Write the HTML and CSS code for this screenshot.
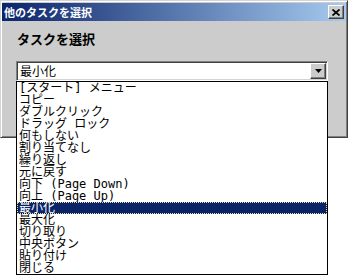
FILE: index.html
```html
<!DOCTYPE html>
<html lang="ja">
<head>
    <meta charset="UTF-8">
    <title>他のタスクを選択</title>
    <link rel="stylesheet" href="styles.css">
</head>
<body>
<div class="window">
    <div class="title-bar">
        <span class="title">他のタスクを選択</span>
        <button class="close" type="button">
            <svg width="8" height="7" viewBox="0 0 8 7">
                <path d="M0.5 0.5L7.5 6.5M7.5 0.5L0.5 6.5" stroke="#000" stroke-width="1.7" fill="none"/>
            </svg>
        </button>
    </div>
    <div class="content">
        <div class="label">タスクを選択</div>
        <div class="combo">
            <span class="combo-value">最小化</span>
            <span class="combo-button">
                <svg width="7" height="4" viewBox="0 0 7 4"><path d="M0 0H7L3.5 4Z" fill="#000"/></svg>
            </span>
            <ul class="list">
                <li>[スタート] メニュー</li>
                <li>コピー</li>
                <li>ダブルクリック</li>
                <li>ドラッグ ロック</li>
                <li>何もしない</li>
                <li>割り当てなし</li>
                <li>繰り返し</li>
                <li>元に戻す</li>
                <li>向下 (Page Down)</li>
                <li>向上 (Page Up)</li>
                <li class="selected">最小化</li>
                <li>最大化</li>
                <li>切り取り</li>
                <li>中央ボタン</li>
                <li>貼り付け</li>
                <li>閉じる</li>
            </ul>
        </div>
    </div>
</div>
</body>
</html>
```
FILE: styles.css
```css
html,
body {
    height: 275px;
}

body {
    margin: 0;

    font-family: "Noto Sans CJK JP", "Liberation Sans", sans-serif;

    background-color: #fff;
}

.window {
    position: relative;

    box-sizing: border-box;
    width: 348px;
    height: 138px;
    padding: 2px 1px 0 1px;

    border: 1px solid;
    border-color: #d4d4d4 #404040 #404040 #d4d4d4;
    background-color: #cccccc;
    box-shadow: inset 1px 1px #fff, inset -1px -1px #808080;
}

.title-bar {
    display: flex;
    align-items: center;
    justify-content: space-between;

    height: 18px;
    padding: 0 2px 0 2px;

    background: linear-gradient(to right, #0a246a, #a6caf0);
}

.title {
    font-size: 11px;
    font-weight: bold;
    line-height: 18px;

    color: #fff;
}

.close {
    display: flex;
    align-items: center;
    justify-content: center;

    box-sizing: border-box;
    width: 16px;
    height: 14px;
    padding: 0;

    border: 1px solid;
    border-color: #fff #404040 #404040 #fff;
    background-color: #cccccc;
    box-shadow: inset -1px -1px #808080;
}

.content {
    padding: 10px 16px 0 14px;
}

.label {
    font-size: 13px;
    font-weight: bold;
    line-height: 16px;

    margin-bottom: 14px;
    padding-left: 1px;

    color: #000;
}

.combo {
    position: relative;
    z-index: 1;

    display: flex;
    align-items: center;
    justify-content: space-between;

    box-sizing: border-box;
    width: 312px;
    height: 20px;

    border: 1px solid;
    border-color: #808080 #fff #fff #808080;
    background-color: #fff;
    box-shadow: inset 1px 1px #404040, inset -1px -1px #d4d4d4;
}

.combo-value {
    font-size: 12px;
    line-height: 16px;

    padding-left: 3px;
}

.combo-button {
    display: flex;
    align-items: center;
    justify-content: center;

    box-sizing: border-box;
    width: 16px;
    height: 16px;
    margin-right: 1px;

    border: 1px solid;
    border-color: #fff #404040 #404040 #fff;
    background-color: #cccccc;
    box-shadow: inset -1px -1px #808080;
}

.list {
    position: absolute;
    top: 19px;
    left: -1px;

    box-sizing: border-box;
    width: 312px;
    margin: 0;
    padding: 0;

    list-style: none;

    border: 1px solid #000;
    background-color: #fff;
}

.list li {
    font-family: "DejaVu Sans Mono", "Noto Sans CJK JP", monospace;
    font-size: 12px;
    line-height: 12px;

    height: 12px;
    padding-left: 2px;

    white-space: nowrap;

    color: #000;
}

.list li.selected {
    color: #fff;
    outline: 1px dotted #f5db95;
    outline-offset: -1px;
    background-color: #0a246a;
}
```
